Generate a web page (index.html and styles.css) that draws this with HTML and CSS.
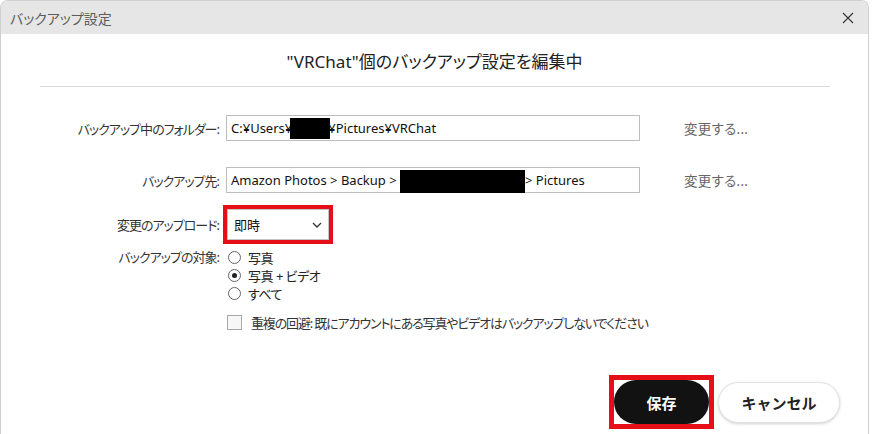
FILE: index.html
```html
<!DOCTYPE html>
<html lang="ja">
<head>
    <meta charset="UTF-8">
    <meta name="viewport" content="width=device-width, initial-scale=1.0">
    <title>バックアップ設定</title>
    <link rel="stylesheet" href="styles.css">
</head>
<body>
    <div class="window">
        <!-- Title bar -->
        <div class="titlebar">
            <span class="title">バックアップ設定</span>
            <svg class="close" width="12" height="12" viewBox="0 0 12 12">
                <path d="M1 1 L11 11 M11 1 L1 11" stroke="#333" stroke-width="1.1" fill="none"/>
            </svg>
        </div>

        <h1 class="heading">"VRChat"個のバックアップ設定を編集中</h1>
        <hr class="divider">

        <div class="form">
            <div class="row path-row">
                <span class="label">バックアップ中のフォルダー:</span>
                <div class="field">C:¥Users¥<span class="redact redact-user"></span>¥Pictures¥VRChat</div>
                <span class="change">変更する...</span>
            </div>

            <div class="row path-row second">
                <span class="label">バックアップ先:</span>
                <div class="field">Amazon Photos &gt; Backup &gt; <span class="redact redact-device"></span>&gt; Pictures</div>
                <span class="change">変更する...</span>
            </div>

            <div class="row select-row">
                <span class="label">変更のアップロード:</span>
                <div class="select">
                    <span>即時</span>
                    <svg width="10" height="6" viewBox="0 0 10 6">
                        <path d="M1 1 L5 5 L9 1" stroke="#333" stroke-width="1.3" fill="none"/>
                    </svg>
                </div>
            </div>

            <div class="row radio-row">
                <span class="label">バックアップの対象:</span>
                <div class="radios">
                    <div class="radio"><span class="dot"></span>写真</div>
                    <div class="radio checked"><span class="dot"></span>写真 + ビデオ</div>
                    <div class="radio"><span class="dot"></span>すべて</div>
                </div>
            </div>

            <div class="row check-row">
                <span class="label"></span>
                <div class="check"><span class="box"></span>重複の回避: 既にアカウントにある写真やビデオはバックアップしないでください</div>
            </div>
        </div>

        <div class="footer">
            <span class="highlight"><button class="save">保存</button></span>
            <button class="cancel">キャンセル</button>
        </div>
    </div>
</body>
</html>
```

FILE: styles.css
```css
body {
    margin: 0;
    background-color: #ffffff;
    font-family: "Noto Sans", "Noto Sans CJK JP", sans-serif;
    font-feature-settings: "palt";
    color: #222;
}

.window {
    width: 869px;
    height: 434px;
    box-sizing: border-box;
    border: 1px solid #cfcfcf;
    border-bottom: none;
    border-radius: 8px 8px 0 0;
    overflow: hidden;
}

.titlebar {
    height: 33px;
    background-color: #e6e6e6;
    display: flex;
    align-items: center;
    justify-content: space-between;
    padding: 0 14px 0 9px;
}

.title {
    font-size: 14px;
    color: #5c5c5c;
}

.heading {
    margin: 16px 0 0;
    font-size: 17px;
    font-weight: normal;
    line-height: 24px;
    text-align: center;
    color: #222;
}

.divider {
    margin: 12px 38px 0 39px;
    border: none;
    border-top: 1px solid #d9d9d9;
}

.form {
    margin-top: 28px;
}

.row {
    display: flex;
    align-items: center;
    font-size: 13px;
}

.label {
    width: 218px;
    flex: none;
    text-align: right;
    color: #333;
    letter-spacing: -1px;
}

.field {
    margin-left: 7px;
    width: 414px;
    height: 26px;
    box-sizing: border-box;
    border: 1px solid #bdbdbd;
    padding: 0 4px;
    display: flex;
    align-items: center;
    white-space: pre;
    color: #111;
}

.redact {
    display: inline-block;
    background-color: #000;
}

.redact-user {
    width: 40px;
    height: 21px;
    margin: 0 -2px;
}

.redact-device {
    width: 125px;
    height: 23px;
    margin-top: 2px;
}

.change {
    margin-left: 44px;
    color: #666;
    font-size: 13.5px;
    letter-spacing: 0.3px;
}

.path-row.second {
    margin-top: 26px;
}

.select-row {
    margin-top: 16px;
}

.select {
    margin-left: 8px;
    width: 102px;
    height: 31px;
    box-sizing: border-box;
    border: 1px solid #c4c4c4;
    outline: 4px solid #e60f17;
    padding: 0 6px;
    display: flex;
    align-items: center;
    justify-content: space-between;
    color: #111;
}

.radio-row {
    margin-top: 8px;
    align-items: flex-start;
}

.radio-row .label {
    line-height: 18px;
}

.radios {
    margin-left: 9px;
}

.radio {
    display: flex;
    align-items: center;
    height: 18px;
    color: #222;
    letter-spacing: -0.5px;
}

.dot {
    width: 11px;
    height: 11px;
    border: 1px solid #666;
    border-radius: 50%;
    margin-right: 7px;
    display: flex;
    align-items: center;
    justify-content: center;
}

.radio.checked .dot::after {
    content: "";
    width: 5px;
    height: 5px;
    border-radius: 50%;
    background-color: #222;
}

.check-row {
    margin-top: 11px;
}

.check {
    margin-left: 8px;
    display: flex;
    align-items: center;
    color: #333;
    letter-spacing: -1.15px;
}

.box {
    width: 13px;
    height: 13px;
    border: 1px solid #a8a8a8;
    background-color: #f7f7f7;
    margin-right: 9px;
}

.footer {
    margin-top: 43px;
    display: flex;
    align-items: center;
    justify-content: flex-end;
    padding-right: 28px;
}

.highlight {
    display: inline-flex;
    border: 5px solid #e60f17;
}

button {
    font-family: "Noto Sans CJK JP", sans-serif;
    font-size: 15px;
    font-weight: bold;
    border-radius: 22px;
    cursor: pointer;
}

button.save {
    width: 95px;
    height: 44px;
    border: none;
    background-color: #121212;
    color: #fff;
}

button.cancel {
    margin-left: 4px;
    width: 122px;
    height: 41px;
    border: 1px solid #e2e2e2;
    background-color: #fff;
    color: #222;
    box-shadow: 0 1px 3px rgba(0, 0, 0, 0.18);
}
```
